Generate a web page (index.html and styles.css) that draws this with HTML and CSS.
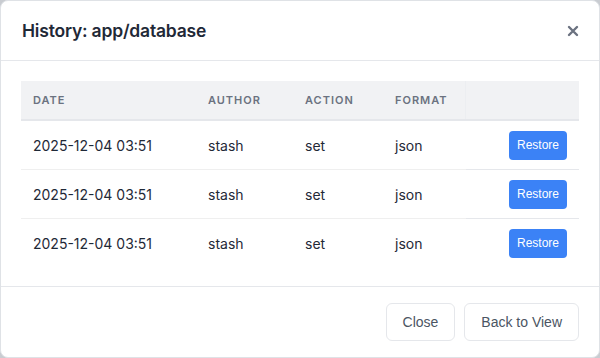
FILE: index.html
```html
<!DOCTYPE html>
<html lang="en">
<head>
    <meta charset="UTF-8">
    <meta name="viewport" content="width=device-width, initial-scale=1.0">
    <title>History</title>
    <link rel="stylesheet" href="styles.css">
</head>
<body>
    <div class="modal">
        <div class="modal-header">
            <h2 class="modal-title">History: app/database</h2>
            <button class="close-x" aria-label="Close">
                <svg width="12" height="12" viewBox="0 0 12 12">
                    <path d="M2 2 L10 10 M10 2 L2 10" stroke="#6b7280" stroke-width="2.4" stroke-linecap="round"/>
                </svg>
            </button>
        </div>

        <div class="modal-body">
            <table class="history-table">
                <thead>
                    <tr>
                        <th class="col-date">Date</th>
                        <th class="col-author">Author</th>
                        <th class="col-action">Action</th>
                        <th class="col-format">Format</th>
                        <th class="col-restore"></th>
                    </tr>
                </thead>
                <tbody>
                    <tr>
                        <td>2025-12-04 03:51</td>
                        <td>stash</td>
                        <td>set</td>
                        <td>json</td>
                        <td class="cell-restore"><button class="restore-btn">Restore</button></td>
                    </tr>
                    <tr>
                        <td>2025-12-04 03:51</td>
                        <td>stash</td>
                        <td>set</td>
                        <td>json</td>
                        <td class="cell-restore"><button class="restore-btn">Restore</button></td>
                    </tr>
                    <tr class="last-row">
                        <td>2025-12-04 03:51</td>
                        <td>stash</td>
                        <td>set</td>
                        <td>json</td>
                        <td class="cell-restore"><button class="restore-btn">Restore</button></td>
                    </tr>
                </tbody>
            </table>
        </div>

        <div class="modal-footer">
            <button class="btn-secondary">Close</button>
            <button class="btn-secondary">Back to View</button>
        </div>
    </div>
</body>
</html>
```

FILE: styles.css
```css
/* Page */
html, body {
    height: 100%;
}

body {
    margin: 0;
    background-color: #c9ccd1;
    font-family: Inter, "Liberation Sans", Arial, sans-serif;
    color: #1f2937;
}

/* Modal */
.modal {
    box-sizing: border-box;
    height: 100%;
    background-color: #ffffff;
    border: 1px solid #dfe2e6;
    border-radius: 8px;
    display: flex;
    flex-direction: column;
}

.modal-header {
    display: flex;
    justify-content: space-between;
    align-items: center;
    height: 59px;
    padding: 0 20px 0 21px;
    border-bottom: 1px solid #e5e7eb;
}

.modal-title {
    margin: 0;
    font-size: 17.5px;
    font-weight: 600;
    color: #1f2937;
    letter-spacing: -0.2px;
}

.close-x {
    background: none;
    border: none;
    padding: 0;
    width: 12px;
    height: 12px;
    cursor: pointer;
    display: flex;
}

.modal-body {
    flex: 1;
    padding: 20px 20px 0 20px;
}

/* Table */
.history-table {
    width: 100%;
    border-collapse: collapse;
    font-size: 14px;
}

.history-table th {
    background-color: #f1f2f4;
    color: #6b7280;
    font-size: 11px;
    font-weight: 600;
    text-transform: uppercase;
    letter-spacing: 0.09em;
    text-align: left;
    height: 38px;
    padding: 0 12px;
    border-bottom: 2px solid #e5e7eb;
}

.history-table th.col-restore {
    border-left: 1px solid #eceef1;
    background-color: #f1f2f4;
}

.col-date { width: 151px; }
.col-author { width: 73px; }
.col-action { width: 66px; }
.col-format { width: 58px; }

.history-table td {
    height: 48px;
    padding: 0 12px;
    color: #1f2937;
    border-bottom: 1px solid #efefef;
}

.history-table td.cell-restore {
    text-align: right;
    border-bottom-color: #e5e7eb;
}

.history-table tr.last-row td {
    border-bottom: none;
}

.restore-btn {
    background-color: #3b82f6;
    color: #ffffff;
    border: none;
    border-radius: 4px;
    font-family: "Liberation Sans", Arial, sans-serif;
    font-size: 12px;
    width: 58px;
    height: 29px;
    padding: 0;
    cursor: pointer;
}

/* Footer */
.modal-footer {
    display: flex;
    justify-content: flex-end;
    gap: 9px;
    padding: 16px 20px 16px 20px;
    border-top: 1px solid #e5e7eb;
}

.btn-secondary {
    background-color: #ffffff;
    color: #4b5563;
    border: 1px solid #e5e7eb;
    border-radius: 6px;
    font-family: "Liberation Sans", Arial, sans-serif;
    font-size: 14px;
    height: 38px;
    padding: 0 16px;
    cursor: pointer;
}
```
